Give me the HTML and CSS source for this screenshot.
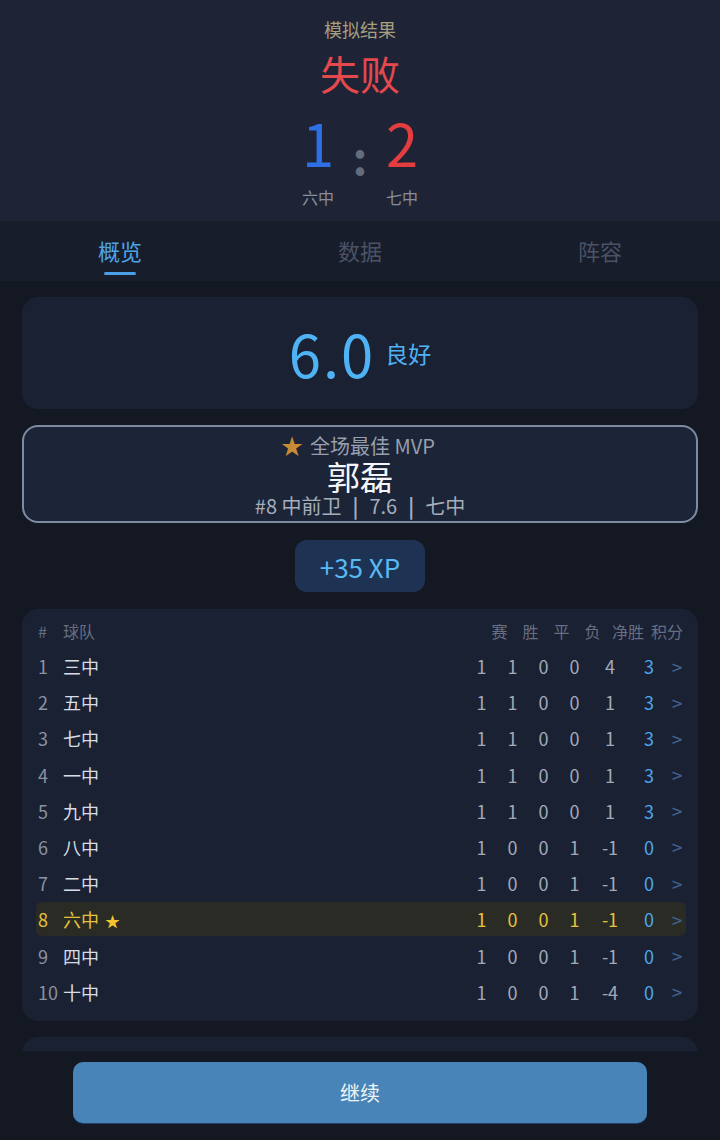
FILE: index.html
```html
<!DOCTYPE html>
<html lang="zh-CN">
<head>
  <meta charset="UTF-8" />
  <title>模拟结果</title>
  <link rel="stylesheet" href="styles.css">
</head>
<body>
  <div class="app">
    <!-- Result header -->
    <header class="result-head">
      <div class="result-label">模拟结果</div>
      <div class="result-text">失败</div>
      <div class="score">
        <div class="score-team">
          <span class="score-num home">1</span>
          <span class="score-name">六中</span>
        </div>
        <span class="score-colon">:</span>
        <div class="score-team">
          <span class="score-num away">2</span>
          <span class="score-name">七中</span>
        </div>
      </div>
    </header>

    <!-- Tabs -->
    <nav class="tabs">
      <div class="tab active">概览<span class="tab-bar"></span></div>
      <div class="tab">数据</div>
      <div class="tab">阵容</div>
    </nav>

    <main class="content">
      <div class="card rating-card">
        <span class="rating-value">6.0</span>
        <span class="rating-label">良好</span>
      </div>

      <div class="mvp-card">
        <div class="mvp-title"><span class="mvp-star">★</span>全场最佳 MVP</div>
        <div class="mvp-name">郭磊</div>
        <div class="mvp-info">#8 中前卫<b>|</b>7.6<b>|</b>七中</div>
      </div>

      <div class="xp-wrap">
        <div class="xp-pill">+35 XP</div>
      </div>

      <div class="card table-card">
        <div class="table-head">
          <span>#</span>
          <span>球队</span>
          <span class="c">赛</span>
          <span class="c">胜</span>
          <span class="c">平</span>
          <span class="c">负</span>
          <span class="c">净胜</span>
          <span class="c">积分</span>
        </div>
        <div id="tableBody"></div>
      </div>

      <div class="card next-card"></div>
    </main>

    <footer class="footer">
      <button class="continue-btn">继续</button>
    </footer>
  </div>

  <script>
    // standings data: rank, team, played, win, draw, loss, goal diff, points
    const rows = [
      [1, '三中', 1, 1, 0, 0, 4, 3],
      [2, '五中', 1, 1, 0, 0, 1, 3],
      [3, '七中', 1, 1, 0, 0, 1, 3],
      [4, '一中', 1, 1, 0, 0, 1, 3],
      [5, '九中', 1, 1, 0, 0, 1, 3],
      [6, '八中', 1, 0, 0, 1, -1, 0],
      [7, '二中', 1, 0, 0, 1, -1, 0],
      [8, '六中', 1, 0, 0, 1, -1, 0],
      [9, '四中', 1, 0, 0, 1, -1, 0],
      [10, '十中', 1, 0, 0, 1, -4, 0]
    ];
    const myTeam = '六中';

    let html = '';
    rows.forEach(r => {
      const mine = r[1] === myTeam;
      html += `
        <div class="table-row${mine ? ' mine' : ''}">
          <span class="rank">${r[0]}</span>
          <span class="team">${r[1]}${mine ? ' <span class="team-star">★</span>' : ''}</span>
          <span class="c">${r[2]}</span>
          <span class="c">${r[3]}</span>
          <span class="c">${r[4]}</span>
          <span class="c">${r[5]}</span>
          <span class="c">${r[6]}</span>
          <span class="c pts">${r[7]}</span>
          <span class="c arrow">&gt;</span>
        </div>`;
    });
    document.getElementById('tableBody').innerHTML = html;
  </script>
</body>
</html>
```

FILE: styles.css
```css
* {
  box-sizing: border-box;
}
body {
  margin: 0;
  font-family: "Noto Sans CJK SC", "Noto Sans", sans-serif;
  background-color: #131822;
  color: #d6dbe3;
}
.app {
  height: 100vh;
  display: flex;
  flex-direction: column;
  overflow: hidden;
}

/* header */
.result-head {
  background-color: #1e2436;
  padding: 17px 0 13px;
  text-align: center;
}
.result-label {
  font-size: 18px;
  line-height: 24px;
  color: #a69e7e;
}
.result-text {
  margin-top: 8px;
  font-size: 40px;
  line-height: 48px;
  color: #e5484d;
}
.score {
  margin-top: 16px;
  display: flex;
  justify-content: center;
  align-items: center;
}
.score-team {
  width: 60px;
  display: flex;
  flex-direction: column;
  align-items: center;
}
.score-num {
  font-size: 58px;
  line-height: 58px;
}
.score-num.home {
  color: #2f6fe6;
}
.score-num.away {
  color: #e43d3f;
}
.score-name {
  margin-top: 15px;
  font-size: 16px;
  line-height: 22px;
  color: #878e9d;
}
.score-colon {
  width: 24px;
  font-size: 46px;
  line-height: 60px;
  font-weight: 700;
  color: #646b7a;
  text-align: center;
  margin-top: -11px;
}

/* tabs */
.tabs {
  display: grid;
  grid-template-columns: repeat(3, 1fr);
  height: 60px;
  background-color: #171d2b;
}
.tab {
  display: flex;
  flex-direction: column;
  align-items: center;
  padding-top: 15px;
  font-size: 22px;
  line-height: 28px;
  color: #4a5264;
}
.tab.active {
  color: #4ea4e8;
}
.tab-bar {
  margin-top: 8px;
  width: 32px;
  height: 3px;
  border-radius: 2px;
  background-color: #4a9fe8;
}

/* content */
.content {
  flex: 1;
  overflow: hidden;
  padding: 16px 22px 0;
  display: flex;
  flex-direction: column;
  gap: 16px;
}
.card {
  background-color: #1a2133;
  border-radius: 16px;
  flex-shrink: 0;
}
.rating-card {
  height: 112px;
  display: flex;
  justify-content: center;
  align-items: center;
  gap: 10px;
  color: #4fb2f5;
}
.rating-value {
  font-size: 58px;
  line-height: 1;
  letter-spacing: 2px;
}
.rating-label {
  font-size: 23px;
}

.mvp-card {
  flex-shrink: 0;
  height: 98px;
  border: 2px solid #7c8ba1;
  border-radius: 16px;
  background-color: #1c2437;
  padding: 5px 0;
  text-align: center;
}
.mvp-title {
  font-size: 20px;
  line-height: 24px;
  color: #979fae;
}
.mvp-star {
  font-size: 22px;
  color: #c98c36;
  margin-right: 3px;
  position: relative;
  left: -4px;
}
.mvp-name {
  font-size: 33px;
  line-height: 36px;
  color: #f4f6f9;
}
.mvp-info {
  font-size: 20px;
  line-height: 24px;
  color: #a6aebb;
}
.mvp-info b {
  margin: 0 11px;
}

.xp-wrap {
  display: flex;
  justify-content: center;
  flex-shrink: 0;
  margin-top: 1px;
}
.xp-pill {
  width: 130px;
  height: 52px;
  border-radius: 12px;
  background-color: #1e3353;
  color: #59baf3;
  font-size: 26px;
  display: flex;
  align-items: center;
  justify-content: center;
}

/* standings table */
.table-card {
  margin-top: 1px;
  padding: 13px 12px 12px 14px;
}
.table-head,
.table-row {
  display: grid;
  grid-template-columns: 25px 1fr 31px 31px 31px 31px 40px 38px;
  align-items: center;
  padding: 0 0 0 2px;
}
.table-row {
  grid-template-columns: 25px 1fr 31px 31px 31px 31px 40px 38px 18px;
  height: 34px;
  margin-top: 2.2px;
  font-size: 18px;
  color: #a2aab8;
  border-radius: 6px;
}
.table-head {
  height: 18px;
  font-size: 16px;
  line-height: 18px;
  color: #666f82;
  margin-bottom: 9px;
}
.c {
  text-align: center;
}
.rank {
  color: #8a92a2;
}
.team {
  color: #d8dde5;
}
.pts {
  color: #4aa8ee;
}
.arrow {
  font-size: 19px;
  color: #41618d;
}
.table-row.mine {
  background-color: #2a2b25;
  color: #e8c23b;
}
.table-row.mine .rank,
.table-row.mine .team {
  color: #e8c23b;
}
.team-star {
  font-size: 15px;
  color: #f2c52f;
  margin-left: 2px;
}

.next-card {
  height: 120px;
}

/* footer */
.footer {
  flex-shrink: 0;
  background-color: #131822;
  padding: 11px 73px 17px;
}
.continue-btn {
  width: 100%;
  height: 61px;
  border: none;
  border-radius: 10px;
  background-color: #4884b7;
  box-shadow: 0 1px 0 #22416a;
  color: #f0f4f8;
  font-family: inherit;
  font-size: 20px;
  cursor: pointer;
}
```
